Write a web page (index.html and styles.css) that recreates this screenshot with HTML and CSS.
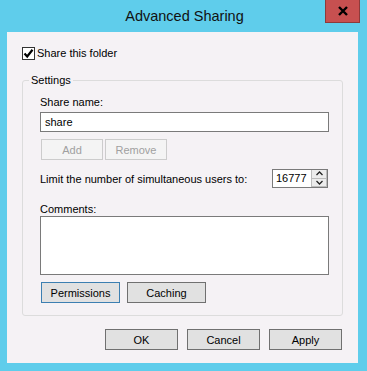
FILE: index.html
```html
<!DOCTYPE html>
<html lang="en">
<head>
    <meta charset="UTF-8">
    <title>Advanced Sharing</title>
    <link rel="stylesheet" href="styles.css">
</head>
<body>
    <div class="titlebar">
        <span></span>
        <div class="title">Advanced Sharing</div>
        <button class="close">
            <svg width="12" height="10" viewBox="0 0 12 10"><path d="M2 1 L10 9 M10 1 L2 9" stroke="#000" stroke-width="2.4"/></svg>
        </button>
    </div>

    <div class="panel">
        <label class="check-row">
            <span class="checkbox">
                <svg width="11" height="11" viewBox="0 0 11 11"><path d="M1.5 5.5 L4.2 8.5 L9.5 1.8" fill="none" stroke="#000" stroke-width="2.2"/></svg>
            </span>
            Share this folder
        </label>

        <div class="group">
            <span class="legend">Settings</span>
            <div class="field-label">Share name:</div>
            <div class="textbox">share</div>
            <div class="btn-row small">
                <button class="btn disabled">Add</button>
                <button class="btn disabled">Remove</button>
            </div>
            <div class="limit-row">
                <span>Limit the number of simultaneous users to:</span>
                <div class="spinner">
                    <div class="spin-value">16777</div>
                    <div class="spin-btns">
                        <div class="spin-btn"><svg width="7" height="5" viewBox="0 0 7 5"><path d="M0.5 4 L3.5 1 L6.5 4" fill="none" stroke="#222" stroke-width="1.3"/></svg></div>
                        <div class="spin-btn"><svg width="7" height="5" viewBox="0 0 7 5"><path d="M0.5 1 L3.5 4 L6.5 1" fill="none" stroke="#222" stroke-width="1.3"/></svg></div>
                    </div>
                </div>
            </div>
            <div class="field-label comments">Comments:</div>
            <div class="textarea"></div>
            <div class="btn-row wide">
                <button class="btn focused">Permissions</button>
                <button class="btn">Caching</button>
            </div>
        </div>

        <div class="footer">
            <button class="btn">OK</button>
            <button class="btn">Cancel</button>
            <button class="btn">Apply</button>
        </div>
    </div>
</body>
</html>
```

FILE: styles.css
```css
body {
    margin: 0;
    background-color: #5fcdeb;
    font-family: "Liberation Sans", Arial, sans-serif;
    font-size: 11px;
    color: #000;
    width: 367px;
    height: 371px;
    overflow: hidden;
}

.titlebar {
    height: 32px;
    display: grid;
    grid-template-columns: 1fr auto 1fr;
    align-items: start;
}

.title {
    font-size: 14.5px;
    line-height: 32px;
    padding-left: 2px;
    color: #111;
}

.close {
    justify-self: end;
    margin-right: 7px;
    width: 35px;
    height: 23px;
    padding: 0;
    border: 1px solid #8d3a3a;
    border-top: none;
    background-color: #c75050;
    display: flex;
    align-items: center;
    justify-content: center;
}

.panel {
    background-color: #f5f2f5;
    margin: 0 9px 0 7px;
    height: 331px;
    box-sizing: border-box;
    padding: 15px 16px 0 15px;
}

.check-row {
    display: flex;
    align-items: center;
    gap: 2px;
    height: 13px;
    line-height: 13px;
}

.checkbox {
    width: 11px;
    height: 11px;
    border: 1px solid #333;
    background-color: #fff;
    display: flex;
}

.group {
    position: relative;
    margin-top: 20px;
    width: 321px;
    box-sizing: border-box;
    border: 1px solid #dcdcdc;
    border-radius: 3px;
    padding: 14px 13px 12px 17px;
}

.legend {
    position: absolute;
    top: -8px;
    left: 6px;
    padding: 0 2px;
    line-height: 15px;
    background-color: #f5f2f5;
}

.field-label {
    line-height: 15px;
}

.textbox {
    margin-top: 2px;
    height: 20px;
    box-sizing: border-box;
    border: 1px solid #7a7a7a;
    background-color: #fff;
    padding-left: 4px;
    line-height: 18px;
}

.btn-row {
    display: flex;
    margin-top: 7px;
    padding-left: 1px;
}

.btn-row.small {
    gap: 2px;
}

.btn-row.small .btn {
    width: 62px;
}

.btn-row.wide {
    gap: 7px;
}

.btn-row.wide .btn {
    width: 79px;
}

.btn {
    height: 21px;
    box-sizing: border-box;
    border: 1px solid #707070;
    background-color: #e1e1e1;
    font-family: inherit;
    font-size: 11px;
    color: #000;
    padding: 0;
}

.btn.disabled {
    border-color: #cccccc;
    background-color: #f4f4f4;
    color: #a0a0a0;
}

.btn.focused {
    border-color: #3c7fb1;
}

.limit-row {
    margin-top: 9px;
    display: flex;
    align-items: center;
    justify-content: space-between;
    height: 19px;
    padding-right: 1px;
    white-space: nowrap;
}

.spinner {
    display: flex;
    height: 19px;
    border: 1px solid #7a7a7a;
    box-sizing: border-box;
    background-color: #fff;
}

.spin-value {
    width: 38px;
    padding-left: 3px;
    box-sizing: border-box;
    line-height: 17px;
    overflow: hidden;
}

.spin-btns {
    width: 16px;
    display: flex;
    flex-direction: column;
}

.spin-btn {
    flex: 1;
    border: 1px solid #bcbcbc;
    border-top-width: 0;
    background-color: #ececec;
    display: flex;
    align-items: center;
    justify-content: center;
}

.comments {
    margin-top: 15px;
    line-height: 13px;
}

.textarea {
    height: 59px;
    box-sizing: border-box;
    border: 1px solid #7a7a7a;
    background-color: #fff;
}

.footer {
    display: flex;
    justify-content: flex-end;
    gap: 9px;
    margin-top: 13px;
    padding-right: 0;
}

.footer .btn {
    width: 73px;
}
```
